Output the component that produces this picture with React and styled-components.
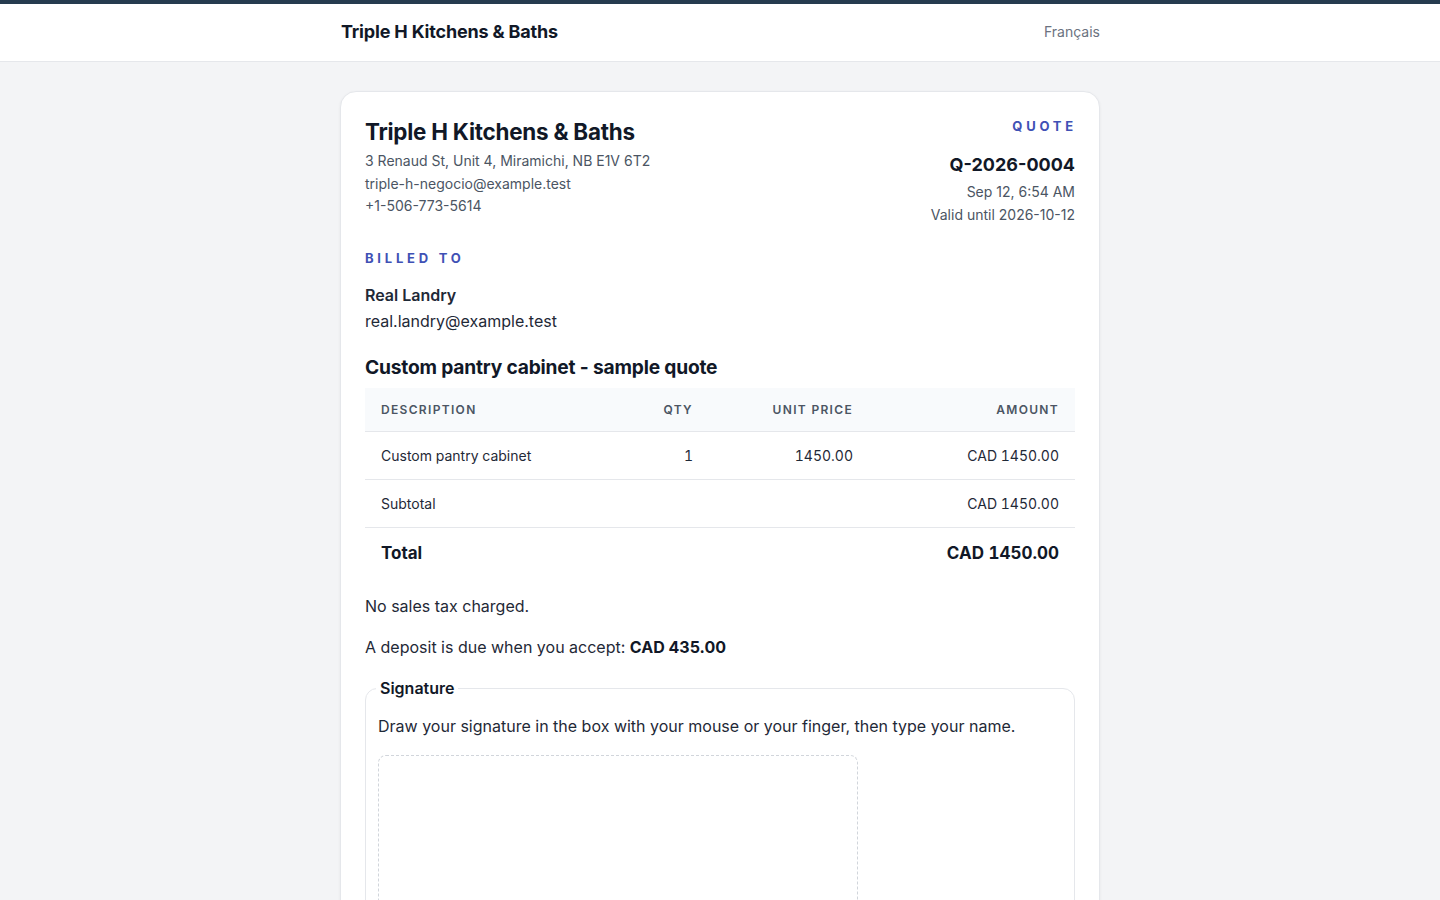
import React from "react";
import styled, { createGlobalStyle } from "styled-components";

const GlobalStyle = createGlobalStyle`
  html, body {
    margin: 0;
    padding: 0;
    background: #f3f4f6;
    font-family: Inter, "Noto Sans", "Liberation Sans", sans-serif;
    color: #111827;
  }
`;

const quote = {
  company: "Triple H Kitchens & Baths",
  address: "3 Renaud St, Unit 4, Miramichi, NB E1V 6T2",
  email: "triple-h-negocio@example.test",
  phone: "+1-506-773-5614",
  number: "Q-2026-0004",
  date: "Sep 12, 6:54 AM",
  validUntil: "2026-10-12",
  client: { name: "Real Landry", email: "real.landry@example.test" },
  title: "Custom pantry cabinet - sample quote",
  items: [{ description: "Custom pantry cabinet", qty: 1, price: "1450.00", amount: "CAD 1450.00" }],
  subtotal: "CAD 1450.00",
  total: "CAD 1450.00",
  deposit: "CAD 435.00",
};

const App = () => {
  return (
    <>
      <GlobalStyle />
      <TopBar>
        <HeaderInner>
          <Brand>{quote.company}</Brand>
          <LangLink href="#">Français</LangLink>
        </HeaderInner>
      </TopBar>
      <Main>
        <Card>
          <CardHead>
            <div>
              <CompanyName>{quote.company}</CompanyName>
              <Muted>{quote.address}</Muted>
              <Muted>{quote.email}</Muted>
              <Muted>{quote.phone}</Muted>
            </div>
            <Meta>
              <Eyebrow>Quote</Eyebrow>
              <QuoteNumber>{quote.number}</QuoteNumber>
              <Muted>{quote.date}</Muted>
              <Muted>Valid until {quote.validUntil}</Muted>
            </Meta>
          </CardHead>

          <BilledTo>
            <Eyebrow>Billed to</Eyebrow>
            <ClientName>{quote.client.name}</ClientName>
            <ClientEmail>{quote.client.email}</ClientEmail>
          </BilledTo>

          <QuoteTitle>{quote.title}</QuoteTitle>

          <Table>
            <colgroup>
              <col style={{ width: 264 }} />
              <col style={{ width: 80 }} />
              <col style={{ width: 160 }} />
              <col />
            </colgroup>
            <thead>
              <tr>
                <Th>Description</Th>
                <Th $right>Qty</Th>
                <Th $right>Unit price</Th>
                <Th $right>Amount</Th>
              </tr>
            </thead>
            <tbody>
              {quote.items.map((item) => (
                <tr key={item.description}>
                  <Td>{item.description}</Td>
                  <Td $right>{item.qty}</Td>
                  <Td $right>{item.price}</Td>
                  <Td $right>{item.amount}</Td>
                </tr>
              ))}
              <tr>
                <Td colSpan={3}>Subtotal</Td>
                <Td $right>{quote.subtotal}</Td>
              </tr>
              <tr>
                <TotalCell colSpan={3}>Total</TotalCell>
                <TotalCell $right>{quote.total}</TotalCell>
              </tr>
            </tbody>
          </Table>

          <Note>No sales tax charged.</Note>
          <Note>
            A deposit is due when you accept: <strong>{quote.deposit}</strong>
          </Note>

          <SignatureSet>
            <Legend>Signature</Legend>
            <Hint>Draw your signature in the box with your mouse or your finger, then type your name.</Hint>
            <SignaturePad />
          </SignatureSet>
        </Card>
      </Main>
    </>
  );
};

const TopBar = styled.header`
  background: #ffffff;
  border-top: 4px solid #263b4f;
  border-bottom: 1px solid #e5e7eb;
`;

const HeaderInner = styled.div`
  max-width: 760px;
  margin: 0 auto;
  height: 57px;
  padding-bottom: 2px;
  box-sizing: border-box;
  display: flex;
  align-items: center;
  justify-content: space-between;
`;

const Brand = styled.div`
  font-size: 18px;
  font-weight: 700;
  letter-spacing: -0.01em;
  color: #111827;
  padding-left: 1px;
`;

const LangLink = styled.a`
  font-size: 14px;
  color: #6b7280;
  text-decoration: none;
`;

const Main = styled.main`
  max-width: 760px;
  margin: 0 auto;
  padding: 29px 0 40px;
`;

const Card = styled.section`
  background: #ffffff;
  border: 1px solid #e5e7eb;
  border-radius: 16px;
  box-shadow: 0 1px 3px rgba(15, 23, 42, 0.06);
  padding: 24px 24px 32px;
`;

const CardHead = styled.div`
  display: flex;
  justify-content: space-between;
  align-items: flex-start;
`;

const CompanyName = styled.h1`
  margin: 1px 0 3px;
  font-size: 22.4px;
  line-height: 30px;
  font-weight: 700;
  letter-spacing: -0.01em;
  color: #111827;
`;

const Muted = styled.div`
  font-size: 14px;
  line-height: 22.5px;
  color: #4b5563;
`;

const Meta = styled.div`
  text-align: right;
`;

const Eyebrow = styled.div`
  font-size: 13px;
  line-height: 20px;
  font-weight: 700;
  letter-spacing: 0.29em;
  text-transform: uppercase;
  color: #3f51b5;
  margin-right: -2px;
`;

const QuoteNumber = styled.div`
  font-size: 18px;
  line-height: 26px;
  font-weight: 700;
  color: #111827;
  margin: 16px 0 3px;
`;

const BilledTo = styled.div`
  margin-top: 22px;
`;

const ClientName = styled.div`
  margin-top: 15px;
  font-size: 16px;
  line-height: 24px;
  font-weight: 600;
  color: #1f2937;
`;

const ClientEmail = styled.div`
  margin-top: 2px;
  font-size: 16px;
  line-height: 24px;
  color: #1f2937;
`;

const QuoteTitle = styled.h2`
  margin: 20px 0 7px;
  font-size: 19.2px;
  line-height: 28px;
  font-weight: 700;
  letter-spacing: -0.01em;
  color: #111827;
`;

const Table = styled.table`
  width: 100%;
  border-collapse: collapse;
  table-layout: fixed;
`;

const Th = styled.th`
  background: #f8fafc;
  height: 43px;
  padding: 0 16px;
  font-size: 12px;
  font-weight: 600;
  letter-spacing: 0.11em;
  text-transform: uppercase;
  color: #4b5563;
  text-align: ${(p) => (p.$right ? "right" : "left")};
  border-bottom: 1px solid #e5e7eb;
`;

const Td = styled.td`
  height: 47px;
  padding: 0 16px;
  font-size: 14px;
  color: #1f2937;
  font-variant-numeric: tabular-nums;
  text-align: ${(p) => (p.$right ? "right" : "left")};
  border-bottom: 1px solid #e5e7eb;
`;

const TotalCell = styled.td`
  height: 50px;
  padding: 0 16px;
  font-size: 17px;
  font-weight: 700;
  color: #111827;
  font-variant-numeric: tabular-nums;
  text-align: ${(p) => (p.$right ? "right" : "left")};
`;

const Note = styled.p`
  margin: 15px 0 0;
  font-size: 16px;
  line-height: 26px;
  color: #1f2937;

  & + & {
    margin-top: 15px;
  }

  strong {
    font-weight: 700;
    color: #111827;
  }
`;

const SignatureSet = styled.fieldset`
  margin: 18px 0 0;
  padding: 16px 12px 16px;
  border: 1px solid #e5e7eb;
  border-radius: 12px;
`;

const Legend = styled.legend`
  padding: 0 4px;
  margin-left: -2px;
  font-size: 16px;
  font-weight: 600;
  color: #111827;
`;

const Hint = styled.p`
  margin: 0 0 17px;
  font-size: 16px;
  line-height: 24px;
  color: #1f2937;
`;

const SignaturePad = styled.div`
  box-sizing: border-box;
  width: 480px;
  height: 200px;
  border: 1px dashed #d1d5db;
  border-radius: 8px;
  background: #ffffff;
`;

export default App;
